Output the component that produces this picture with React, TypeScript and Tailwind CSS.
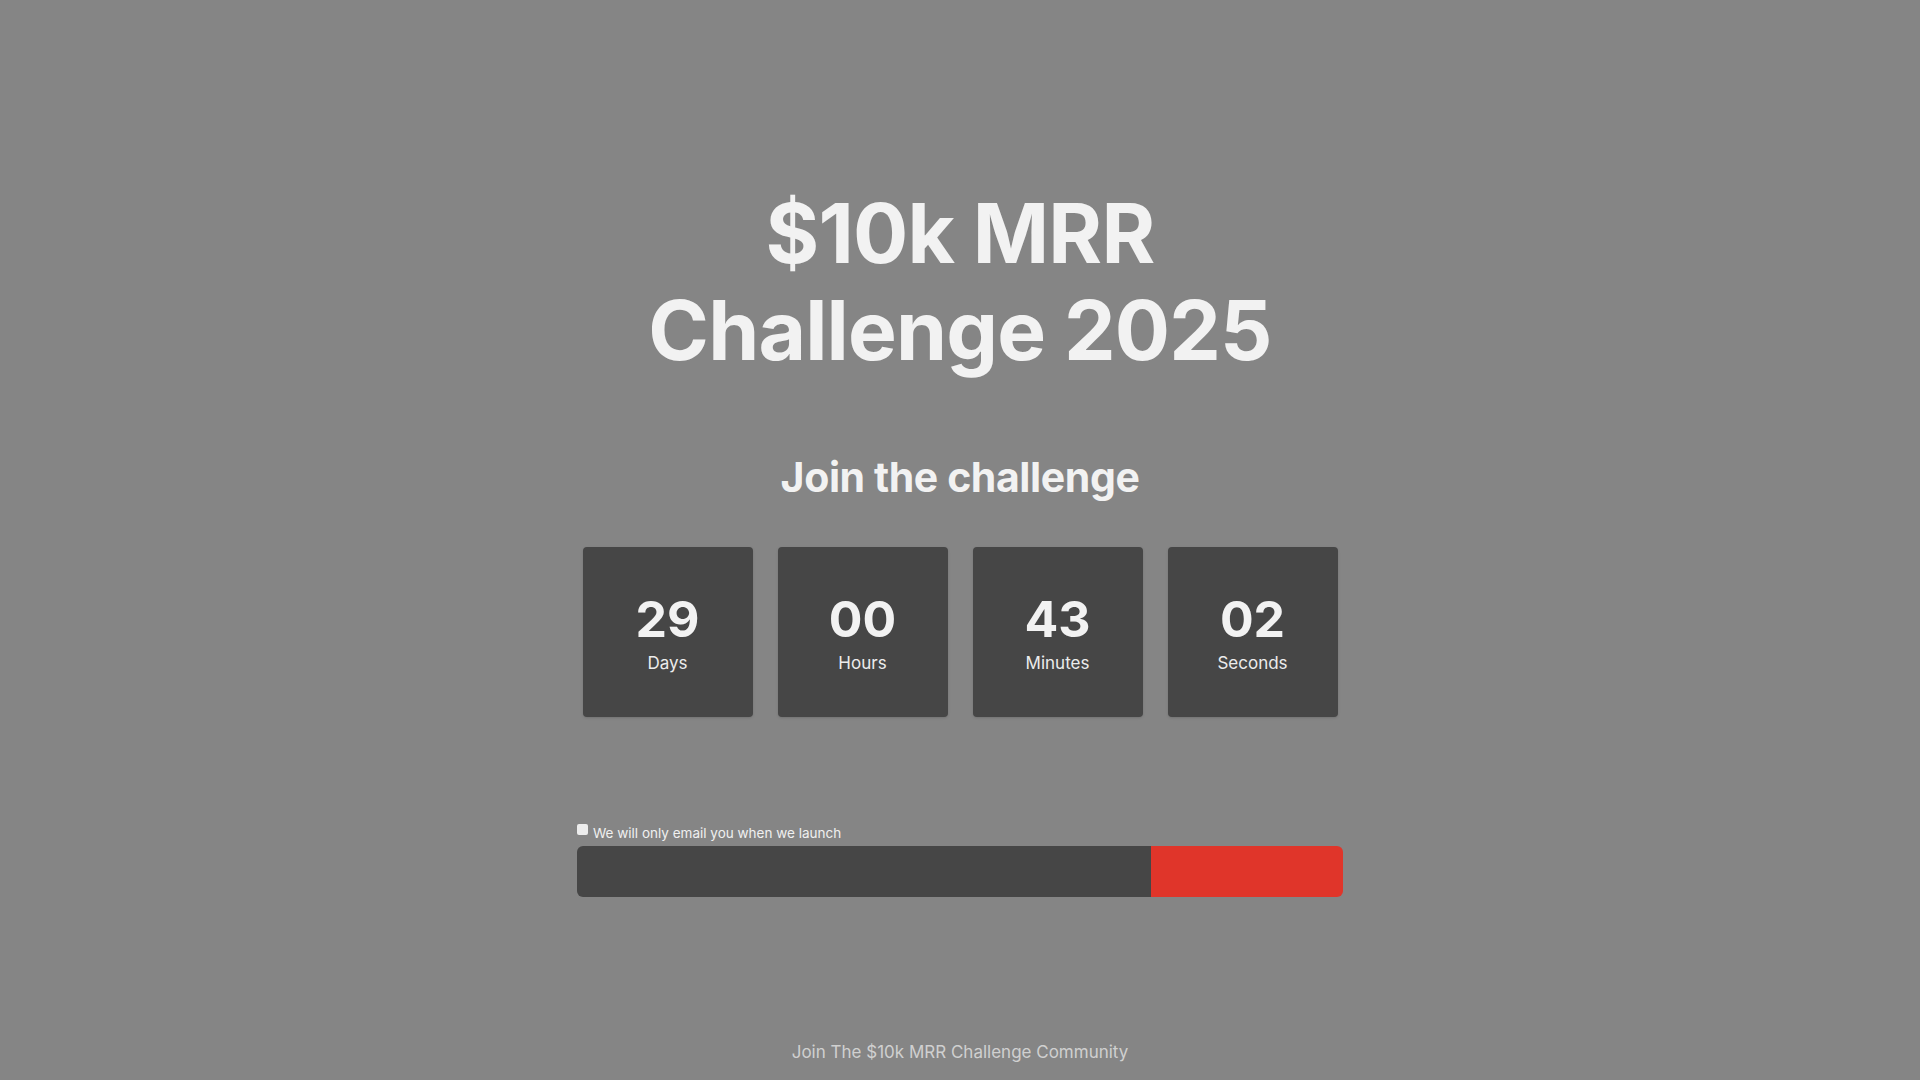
import React from 'react';

const units = [
  { value: '29', label: 'Days' },
  { value: '00', label: 'Hours' },
  { value: '43', label: 'Minutes' },
  { value: '02', label: 'Seconds' },
];

export default function App() {
  return (
    <div className="min-h-screen w-full bg-[#858585] flex flex-col items-center text-[#f2f2f2]" style={{ fontFamily: 'Inter, "Noto Sans", sans-serif' }}>
      {/* Hero title */}
      <h1 className="mt-[185px] text-center text-[82px] leading-[97px] font-bold tracking-[-0.01em]">
        $10k MRR
        <br />
        Challenge 2025
      </h1>

      <h2 className="mt-[74px] text-[41px] leading-[48px] font-bold tracking-[-0.01em]">Join the challenge</h2>

      {/* Countdown */}
      <div className="mt-[46px] flex gap-[25px]">
        {units.map((u) => (
          <div key={u.label} className="w-[170px] h-[170px] pt-[6px] rounded-[4px] bg-[#464646] flex flex-col items-center justify-center shadow-sm">
            <span className="text-[50px] leading-[50px] font-bold">{u.value}</span>
            <span className="mt-[5px] text-[17px] leading-[28px] text-[#ececec]">{u.label}</span>
          </div>
        ))}
      </div>

      {/* Email signup */}
      <div className="mt-[106px] w-[766px] flex flex-col">
        <label className="flex items-start gap-[5px] h-[20px]">
          <input type="checkbox" className="appearance-none mt-[1px] w-[11px] h-[11px] rounded-[2px] bg-[#ececec]" />
          <span className="text-[13.5px] leading-[20px] text-[#f0f0f0]">We will only email you when we launch</span>
        </label>
        <div className="mt-[3px] flex h-[51px] rounded-[6px] overflow-hidden">
          <input className="flex-1 bg-[#464646] outline-none px-4 text-white" />
          <button className="w-[192px] bg-[#e0352a]" />
        </div>
      </div>

      <p className="mt-[143px] text-[17px] leading-[24px] text-[#d0d0d0]">Join The $10k MRR Challenge Community</p>
    </div>
  );
}
